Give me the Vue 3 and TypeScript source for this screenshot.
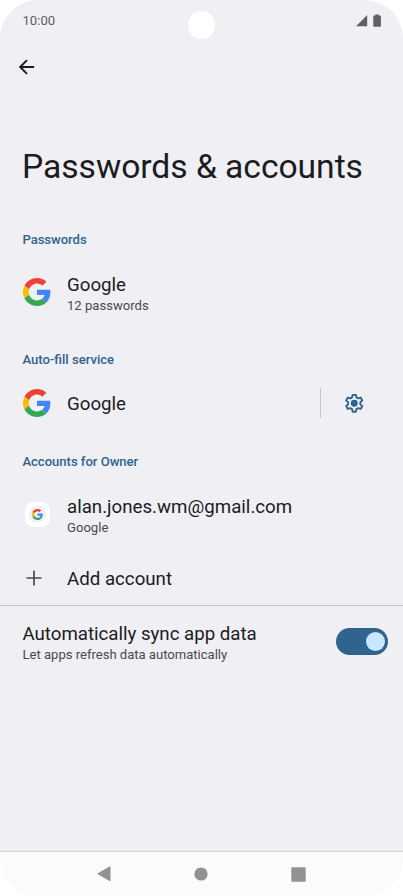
<script setup lang="ts">
import { ref } from 'vue'
const sync = ref<boolean>(true)
const logo: { color: string; d: string }[] = [
  { color: '#ea4335', d: 'M24 9.5c3.54 0 6.71 1.22 9.21 3.6l6.85-6.85C35.9 2.38 30.47 0 24 0 14.62 0 6.51 5.38 2.56 13.22l7.98 6.19C12.43 13.72 17.74 9.5 24 9.5z' },
  { color: '#4285f4', d: 'M46.98 24.55c0-1.57-.15-3.09-.38-4.55H24v9.02h12.94c-.58 2.96-2.26 5.48-4.78 7.18l7.73 6c4.51-4.18 7.09-10.36 7.09-17.65z' },
  { color: '#fbbc05', d: 'M10.53 28.59c-.48-1.45-.76-2.99-.76-4.59s.27-3.14.76-4.59l-7.98-6.19C.92 16.46 0 20.12 0 24c0 3.88.92 7.54 2.56 10.78l7.97-6.19z' },
  { color: '#34a853', d: 'M24 48c6.48 0 11.93-2.13 15.89-5.81l-7.73-6c-2.15 1.45-4.92 2.3-8.16 2.3-6.26 0-11.57-4.22-13.47-9.91l-7.98 6.19C6.51 42.62 14.62 48 24 48z' },
]
</script>

<template>
  <div class="screen">
    <header class="status">
      <span class="time">10:00</span>
      <span class="camera"></span>
      <svg class="signals" width="26" height="14" viewBox="0 0 26 14">
        <path d="M0 12.2 11.2 1v11.2z" />
        <path d="M19.2.4h3.6v1.1h1.3q.8 0 .8.8v9.6q0 .8-.8.8h-6q-.8 0-.8-.8V2.300q0-.8.8-.8h1.100z" />
      </svg>
    </header>
    <div class="toolbar">
      <svg width="16" height="16" viewBox="0 0 16 16">
        <path d="M15.100 8H1.500M8 1.200 1.200 8 8 14.800" />
      </svg>
    </div>
    <h1>Passwords &amp; accounts</h1>

    <h2 class="passwords">Passwords</h2>
    <div class="row saved">
      <span class="icon"><svg class="google" viewBox="0 0 48 48"><path v-for="p in logo" :key="p.color" :fill="p.color" :d="p.d" /></svg></span>
      <div class="copy"><strong>Google</strong><small>12 passwords</small></div>
    </div>

    <h2 class="autofill">Auto-fill service</h2>
    <div class="row service">
      <span class="icon"><svg class="google" viewBox="0 0 48 48"><path v-for="p in logo" :key="p.color" :fill="p.color" :d="p.d" /></svg></span>
      <div class="copy"><strong>Google</strong></div>
      <div class="settings">
        <svg width="22.500" height="22.500" viewBox="0 0 24 24">
          <path class="gear" d="M10.200 3h3.600l.5 2.700 1.900 1.100 2.600-.9 1.800 3.100-2.100 1.800v2.400l2.100 1.800-1.800 3.100-2.600-.9-1.900 1.100-.5 2.700h-3.600l-.5-2.700-1.900-1.100-2.600.9L3.400 15l2.100-1.800v-2.400L3.400 9l1.800-3.100 2.600.9 1.900-1.100z" />
          <circle cx="12" cy="12" r="3.700" />
        </svg>
      </div>
    </div>

    <h2 class="owner">Accounts for Owner</h2>
    <div class="row account">
      <span class="icon"><span class="tile"><span class="disc"><svg class="mini" viewBox="0 0 48 48"><path v-for="p in logo" :key="p.color" :fill="p.color" :d="p.d" /></svg></span></span></span>
      <div class="copy"><strong>alan.jones.wm@gmail.com</strong><small>Google</small></div>
    </div>
    <div class="row add">
      <span class="icon"><svg class="plus" width="16" height="16" viewBox="0 0 16 16"><path d="M8 .5v15M.5 8h15" /></svg></span>
      <div class="copy"><strong>Add account</strong></div>
    </div>

    <div class="row sync">
      <div class="copy"><strong>Automatically sync app data</strong><small>Let apps refresh data automatically</small></div>
      <button class="toggle" :class="{ on: sync }" role="switch" :aria-checked="sync" @click="sync = !sync"><i></i></button>
    </div>

    <nav>
      <svg width="14" height="16" viewBox="0 0 14 16"><path d="M.8 7.300 12.600.6q.9-.4.9.5v13.300q0 .9-.9.500L.8 8.200q-.7-.45 0-.9z" /></svg>
      <svg width="14" height="14" viewBox="0 0 14 14"><circle cx="7" cy="7" r="6.600" /></svg>
      <svg width="15" height="15" viewBox="0 0 15 15"><rect x=".3" y=".3" width="14.400" height="14.400" rx="1" /></svg>
    </nav>
  </div>
</template>

<style>
body { margin: 0; background: #fff; }
</style>

<style scoped>
.screen { box-sizing: border-box; width: 403px; height: 896px; display: flex; flex-direction: column; overflow: hidden; border-radius: 38px; background: #f0eff4; color: #1b1c1f; font-family: Roboto, sans-serif; }
svg { display: block; flex: none; }
.status { height: 44px; box-sizing: border-box; padding: 11px 21px 0 22.500px; display: grid; grid-template-columns: 165.300px 28px 1fr; align-items: start; }
.time { font-size: 13.100px; line-height: 20px; color: #5d5d62; }
.camera { width: 27.500px; height: 27.500px; border-radius: 50%; background: #fff; }
.signals { justify-self: end; margin-top: 3px; fill: #5f5f64; }
.toolbar { height: 46px; box-sizing: border-box; padding: 15px 18.500px 0; }
.toolbar path { fill: none; stroke: #1b1c1f; stroke-width: 1.900; }
h1 { margin: 0; height: 137px; box-sizing: border-box; padding: 57px 0 0 22px; font-size: 33.660px; letter-spacing: -.05px; line-height: 40px; font-weight: 400; white-space: nowrap; }
h2 { margin: 0; height: 20px; padding-left: 22.400px; font-size: 13.100px; line-height: 20px; font-weight: 500; color: #2e648d; }
.passwords { margin-top: 3px; letter-spacing: -.04px; }
.row { display: flex; box-sizing: border-box; align-items: center; padding-left: 22.500px; }
.icon { width: 44.500px; display: flex; flex: none; }
.google { width: 28px; height: 28px; }
.copy { flex: 1; display: flex; flex-direction: column; }
strong { font-size: 18.700px; line-height: 24px; font-weight: 400; white-space: nowrap; }
small { font-size: 13.100px; line-height: 18px; color: #48494e; white-space: nowrap; }
.saved { height: 84px; }
.saved .copy { padding-top: 3px; }
.autofill { margin-top: 16px; }
.service { height: 67px; }
.service .icon { padding-bottom: 2px; }
.settings { width: 83px; height: 30px; box-sizing: border-box; border-left: 1px solid #c6c6cb; padding-left: 22.200px; margin-bottom: 1px; display: flex; align-items: center; }
.gear { fill: none; stroke: #2e648d; stroke-width: 2; stroke-linejoin: round; }
.settings circle { fill: #2e648d; }
.owner { margin-top: 15px; letter-spacing: -.03px; }
.account { height: 84px; }
.account .copy { padding-top: 3px; }
.tile { width: 25px; height: 25px; margin-left: 2px; border-radius: 7px; background: #fff; box-shadow: 0 0 1px #d4d4d8; display: grid; place-items: center; }
.disc { width: 17px; height: 17px; border-radius: 50%; background: #f0f0f4; display: grid; place-items: center; }
.mini { width: 11px; height: 11px; }
.add { height: 49px; padding-bottom: 4px; }
.add .icon { padding-bottom: 2px; }
.plus { margin-left: 3px; }
.plus path { stroke: #48494e; stroke-width: 1.700; }
.sync { height: 75px; border-top: 1px solid #c6c6cb; padding-right: 15px; }
.sync .copy { letter-spacing: -.02px; }
.toggle { width: 52px; height: 27px; box-sizing: border-box; border: 0; border-radius: 14px; margin-bottom: 4px; padding: 0 3.500px; background: #aaa; display: flex; align-items: center; }
.toggle.on { background: #2e648d; justify-content: flex-end; }
.toggle i { width: 19px; height: 19px; border-radius: 50%; background: #cbe6ff; }
nav { margin-top: auto; height: 45px; box-sizing: border-box; border-top: 1px solid #d5d5d9; background: #fbfbfb; display: flex; align-items: center; justify-content: space-between; padding: 0 97px 0 96.700px; fill: #929292; }
</style>
